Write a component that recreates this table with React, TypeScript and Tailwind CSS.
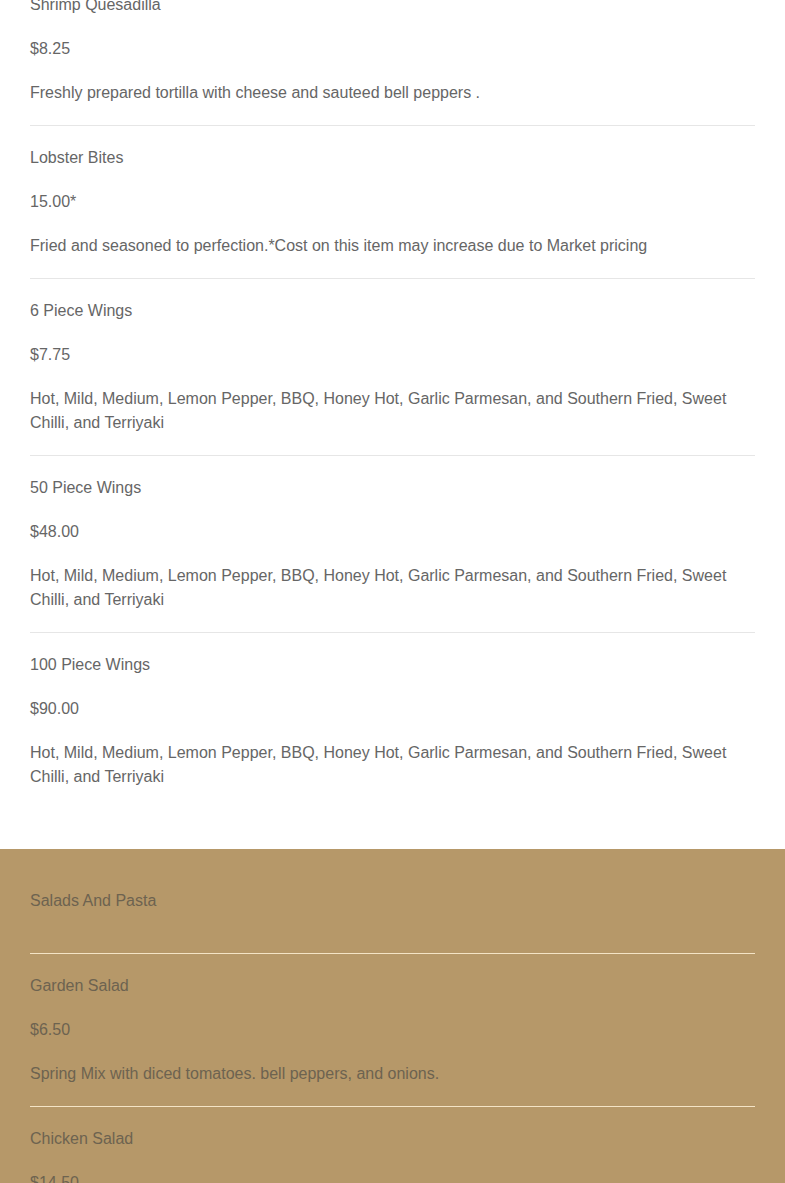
import React from "react";

interface MenuItem {
  name: string;
  price: string;
  desc?: string;
}

const wings =
  "Hot, Mild, Medium, Lemon Pepper, BBQ, Honey Hot, Garlic Parmesan, and Southern Fried, Sweet Chilli, and Terriyaki";

const appetizers: MenuItem[] = [
  { name: "Shrimp Quesadilla", price: "$8.25", desc: "Freshly prepared tortilla with cheese and sauteed bell peppers ." },
  { name: "Lobster Bites", price: "15.00*", desc: "Fried and seasoned to perfection.*Cost on this item may increase due to Market pricing" },
  { name: "6 Piece Wings", price: "$7.75", desc: wings },
  { name: "50 Piece Wings", price: "$48.00", desc: wings },
  { name: "100 Piece Wings", price: "$90.00", desc: wings },
];

const salads: MenuItem[] = [
  { name: "Garden Salad", price: "$6.50", desc: "Spring Mix with diced tomatoes. bell peppers, and onions." },
  { name: "Chicken Salad", price: "$14.50" },
];

const Item = ({ item, line, first }: { item: MenuItem; line: string; first?: boolean }) => (
  <div className={first ? "pt-0" : `border-t pt-5 ${line}`}>
    <p className="mb-5">{item.name}</p>
    <p className="mb-5">{item.price}</p>
    {item.desc && <p className="mb-5">{item.desc}</p>}
  </div>
);

export default function App() {
  return (
    <div className="min-h-screen bg-white text-[16px] leading-6" style={{ fontFamily: '"Liberation Sans", Arial, sans-serif' }}>
      <section className="px-[30px] pb-10 -mt-[7px] text-[#666666]">
        {appetizers.map((item, i) => (
          <Item key={item.name} item={item} first={i === 0} line="border-[#e6e6e6]" />
        ))}
      </section>
      <section className="bg-[#b69869] px-[30px] pt-10 pb-10 text-[#6d6350]">
        <h2 className="mb-10">Salads And Pasta</h2>
        {salads.map((item) => (
          <Item key={item.name} item={item} line="border-[#f4e4c6]" />
        ))}
      </section>
    </div>
  );
}
